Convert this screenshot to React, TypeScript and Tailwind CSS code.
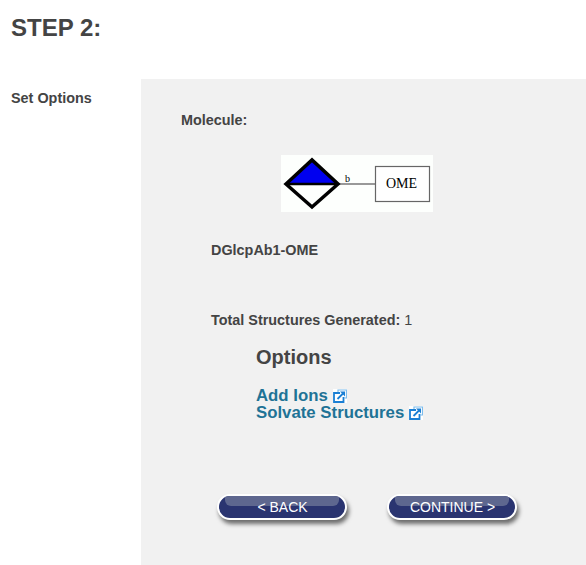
function ExternalIcon() {
  return (
    <svg width="14" height="14" viewBox="0 0 14 14" className="ml-[5px] shrink-0 bg-white" fill="none">
      <path d="M7 4 H1 V13 H10.5 V8" stroke="#1a7fd4" strokeWidth="1.8" />
      <path d="M5 3 V1 H13.5 V9 H11" stroke="#7dbcec" strokeWidth="1.2" />
      <path d="M4.5 10 L10 4.5" stroke="#1a7fd4" strokeWidth="1.8" />
      <path d="M7 2.5 H12 V7.5 Z" fill="#1a7fd4" />
    </svg>
  );
}

function GlossyButton({ label }: { label: string }) {
  return (
    <button className="relative h-[26px] w-[130px] overflow-hidden rounded-[13px] border-2 border-white bg-[#2a3470] pl-[1px] text-[14px] text-white shadow-[2px_4px_4px_rgba(0,0,0,0.55)]">
      <span className="absolute left-[6px] right-[6px] top-0 h-[10px] rounded-b-[6px] bg-[#5e678f]" />
      <span className="relative">{label}</span>
    </button>
  );
}

function MoleculeImage() {
  return (
    <svg width="152" height="57" viewBox="0 0 152 57" className="ml-[100px] mt-[26px] block bg-[#fdfffd]">
      <path d="M58 29 H94" stroke="#777" strokeWidth="1.5" />
      <path d="M5 29 L31 5 L57 29 Z" fill="#0000f0" />
      <path d="M5 29 L31 5 L57 29 L31 52 Z" fill="none" stroke="#000" strokeWidth="3.5" />
      <path d="M5 29 H57" stroke="#000" strokeWidth="2.5" />
      <rect x="94.5" y="11.5" width="54" height="35" fill="#fff" stroke="#666" strokeWidth="1.2" />
      <text x="120.5" y="33" textAnchor="middle" fontSize="14" fill="#000" fontFamily="'Liberation Serif', serif">OME</text>
      <text x="64" y="27" fontSize="10" fill="#000" fontFamily="'Liberation Serif', serif">b</text>
    </svg>
  );
}

export default function App() {
  return (
    <div className="h-[565px] w-[586px] overflow-hidden bg-white font-['Liberation_Sans',sans-serif] text-[#444444]">
      <h1 className="pl-[11px] pt-[14px] text-[24px] font-bold leading-[28px]">STEP 2:</h1>
      <div className="mt-[37px] flex">
        <div className="w-[141px] pl-[11px] pt-[11px] text-[14.4px] font-bold leading-[17px]">Set Options</div>
        <div className="h-[486px] flex-1 bg-[#f1f1f1] pl-[40px] pt-[33px]">
          <p className="text-[14.4px] font-bold leading-[17px]">Molecule:</p>
          <MoleculeImage />
          <p className="ml-[30px] mt-[30px] text-[14.4px] font-bold leading-[17px]">DGlcpAb1-OME</p>
          <p className="ml-[30px] mt-[53px] text-[14.4px] leading-[17px]">
            <b>Total Structures Generated:</b> 1
          </p>
          <h2 className="ml-[75px] mt-[16px] text-[20px] font-bold leading-[24px]">Options</h2>
          <div className="ml-[75px] mt-[18px] text-[16.8px] font-bold leading-[17px] text-[#1f7396]">
            <a className="flex items-center">Add Ions<ExternalIcon /></a>
            <a className="flex items-center">Solvate Structures<ExternalIcon /></a>
          </div>
          <div className="ml-[36px] mt-[73px] flex gap-[40px]">
            <GlossyButton label="< BACK" />
            <GlossyButton label="CONTINUE >" />
          </div>
        </div>
      </div>
    </div>
  );
}
